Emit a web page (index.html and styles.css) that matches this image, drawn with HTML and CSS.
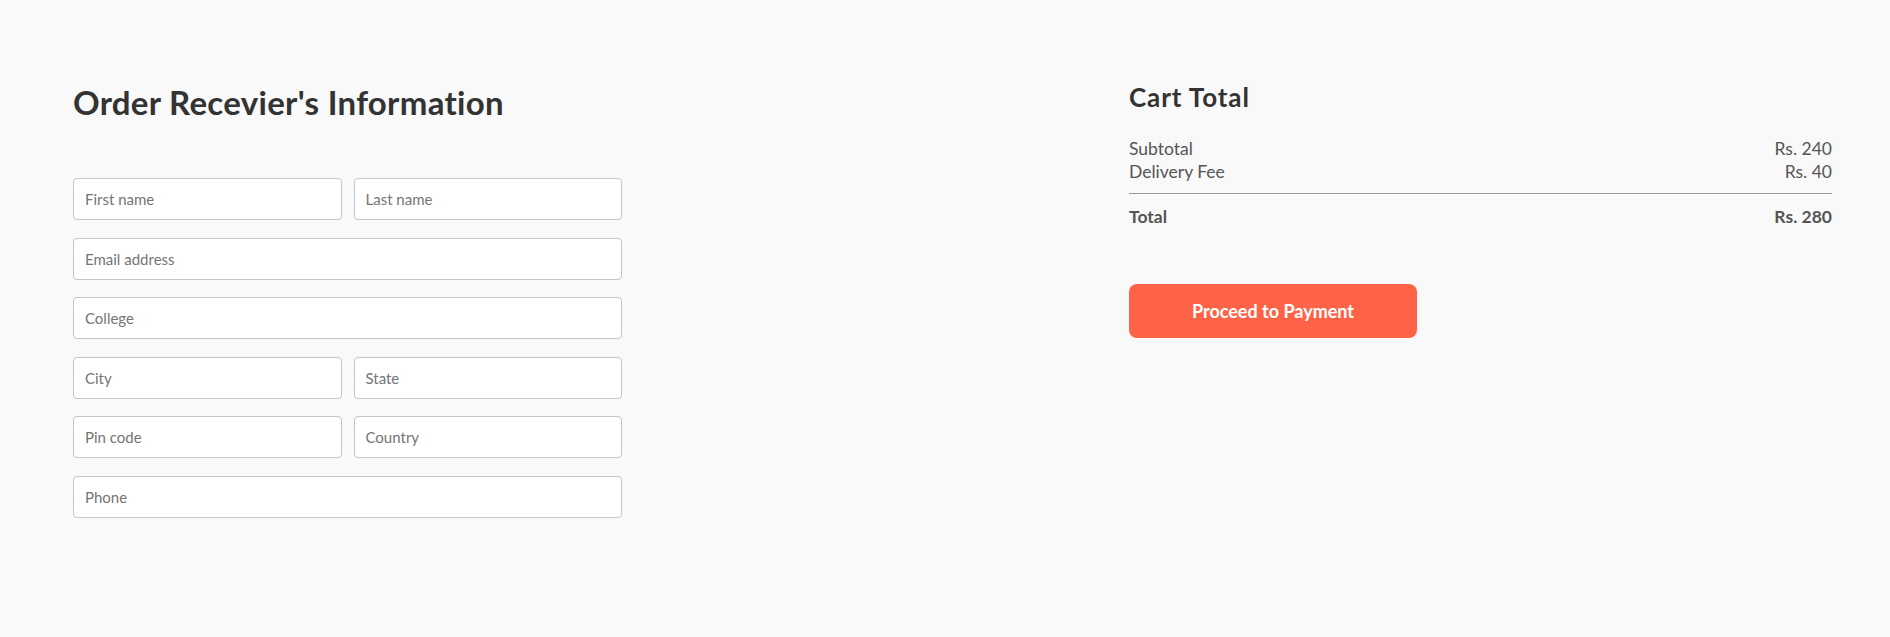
FILE: index.html
```html
<!DOCTYPE html>
<html lang="en">
<head>
<meta charset="utf-8">
<title>Place Order</title>
<link rel="stylesheet" href="styles.css">
</head>
<body>
<form class="place-order">
  <div class="place-order-left">
    <p class="title">Order Recevier's Information</p>
    <div class="fields">
      <div class="multi-fields">
        <input type="text" placeholder="First name">
        <input type="text" placeholder="Last name">
      </div>
      <input type="email" placeholder="Email address">
      <input type="text" placeholder="College">
      <div class="multi-fields">
        <input type="text" placeholder="City">
        <input type="text" placeholder="State">
      </div>
      <div class="multi-fields">
        <input type="text" placeholder="Pin code">
        <input type="text" placeholder="Country">
      </div>
      <input type="text" placeholder="Phone">
    </div>
  </div>
  <div class="place-order-right">
    <div class="cart-total">
      <h2 class="cart-title">Cart Total</h2>
      <div class="cart-rows">
        <div class="cart-total-details"><p>Subtotal</p><p>Rs. 240</p></div>
        <div class="cart-total-details"><p>Delivery Fee</p><p>Rs. 40</p></div>
        <hr class="divider">
        <div class="cart-total-details total"><b>Total</b><b>Rs. 280</b></div>
      </div>
      <button type="button" class="pay-btn">Proceed to Payment</button>
    </div>
  </div>
</form>
</body>
</html>
```

FILE: styles.css
```css
* {
  box-sizing: border-box;
}

body {
  margin: 0;
  background: #f9f9f9;
  font-family: "Lato", "Noto Sans", sans-serif;
  color: #333;
}

.place-order {
  display: flex;
  justify-content: space-between;
  align-items: flex-start;
  padding: 82px 58px 0 73px;
}

.place-order-left {
  width: 549px;
  display: flex;
  flex-direction: column;
}

.title {
  margin: 0 0 56px;
  font-size: 33px;
  line-height: 40px;
  font-weight: 700;
  letter-spacing: 0.3px;
  color: #333;
}

.fields {
  display: flex;
  flex-direction: column;
  gap: 17.5px;
}

.multi-fields {
  display: flex;
  gap: 12px;
}

.fields input {
  width: 100%;
  height: 42px;
  padding: 0 11px;
  border: 1px solid #c5c5c5;
  border-radius: 4px;
  background: #fff;
  font-family: "Lato", "Noto Sans", sans-serif;
  font-size: 15px;
  color: #333;
  outline-color: tomato;
}

.fields input::placeholder {
  color: #757575;
}

.place-order-right {
  width: 703px;
}

.cart-title {
  margin: 0;
  font-size: 26px;
  line-height: 30px;
  font-weight: 700;
  letter-spacing: 0.9px;
  color: #333;
}

.cart-rows {
  margin-top: 25px;
  display: flex;
  flex-direction: column;
}

.cart-total-details {
  display: flex;
  justify-content: space-between;
  color: #555;
  font-size: 17.5px;
  line-height: 23px;
}

.cart-total-details p {
  margin: 0;
}

.divider {
  width: 100%;
  margin: 10px 0 11px;
  border: none;
  border-top: 1px solid #999;
}

.pay-btn {
  margin-top: 56px;
  width: 288px;
  height: 54px;
  border: none;
  border-radius: 8px;
  background: tomato;
  color: #fff;
  font-family: "Lato", "Noto Sans", sans-serif;
  font-size: 18px;
  font-weight: 700;
  cursor: pointer;
}
```
